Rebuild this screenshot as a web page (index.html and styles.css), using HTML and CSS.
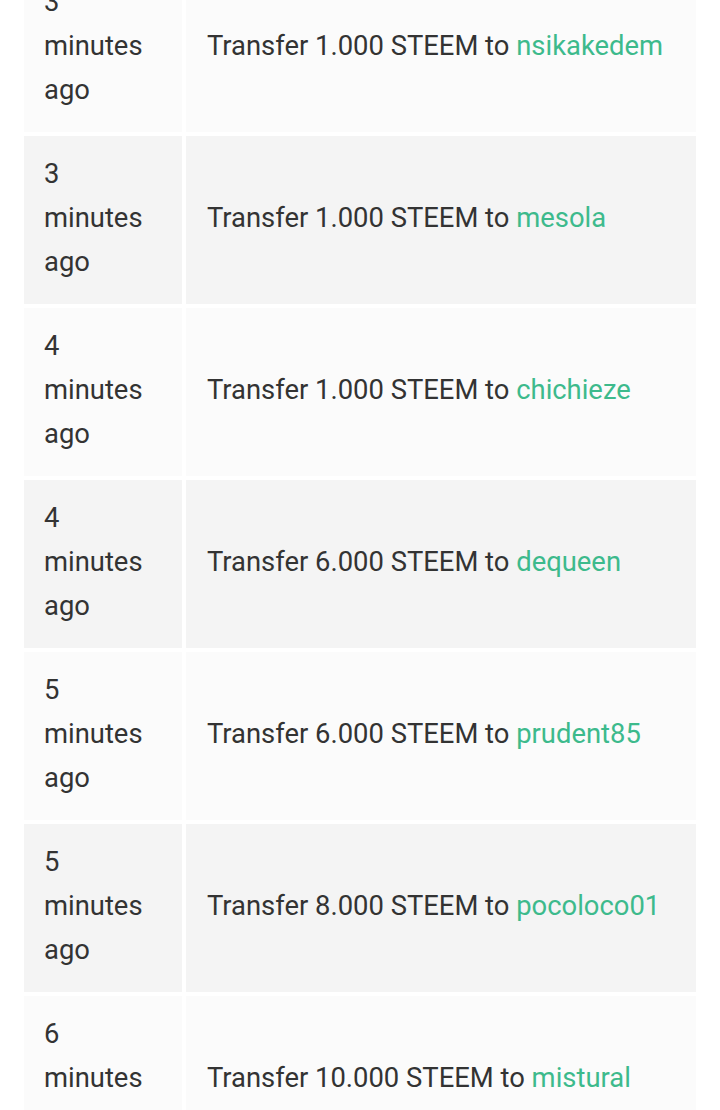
FILE: index.html
```html
<!DOCTYPE html>
<html>
<head>
<meta charset="utf-8">
<link rel="stylesheet" href="styles.css">
</head>
<body>
<div class="viewport">
<table class="tx">
  <tbody>
    <tr><td class="when">3 minutes ago</td><td class="what">Transfer 1.000 STEEM to <a class="acct">nsikakedem</a></td></tr>
    <tr><td class="when">3 minutes ago</td><td class="what">Transfer 1.000 STEEM to <a class="acct">mesola</a></td></tr>
    <tr><td class="when">4 minutes ago</td><td class="what">Transfer 1.000 STEEM to <a class="acct">chichieze</a></td></tr>
    <tr><td class="when">4 minutes ago</td><td class="what">Transfer 6.000 STEEM to <a class="acct">dequeen</a></td></tr>
    <tr><td class="when">5 minutes ago</td><td class="what">Transfer 6.000 STEEM to <a class="acct">prudent85</a></td></tr>
    <tr><td class="when">5 minutes ago</td><td class="what">Transfer 8.000 STEEM to <a class="acct">pocoloco01</a></td></tr>
    <tr><td class="when">6 minutes ago</td><td class="what">Transfer 10.000 STEEM to <a class="acct">mistural</a></td></tr>
  </tbody>
</table>
</div>
</body>
</html>
```

FILE: styles.css
```css
html, body {
  margin: 0;
  padding: 0;
  background: #ffffff;
}
.viewport {
  height: 1110px;
  overflow: hidden;
}
.tx {
  margin: -40px 20px 0 20px;
  border-spacing: 4px;
  border-collapse: separate;
  width: 680px;
  table-layout: fixed;
  font-family: Roboto, "Noto Sans", sans-serif;
  font-size: 27.4px;
  line-height: 44px;
  color: #333333;
}
.tx tr:nth-child(odd) td { background: #fbfbfb; }
.tx tr:nth-child(even) td { background: #f4f4f4; }
.tx td {
  height: 168px;
  box-sizing: border-box;
  padding: 16px 20px 20px 20px;
  vertical-align: middle;
}
.tx td.when { width: 158px; }
.tx td.what { padding-left: 21px; }
.acct {
  color: #3dba8c;
  text-decoration: none;
}
```
